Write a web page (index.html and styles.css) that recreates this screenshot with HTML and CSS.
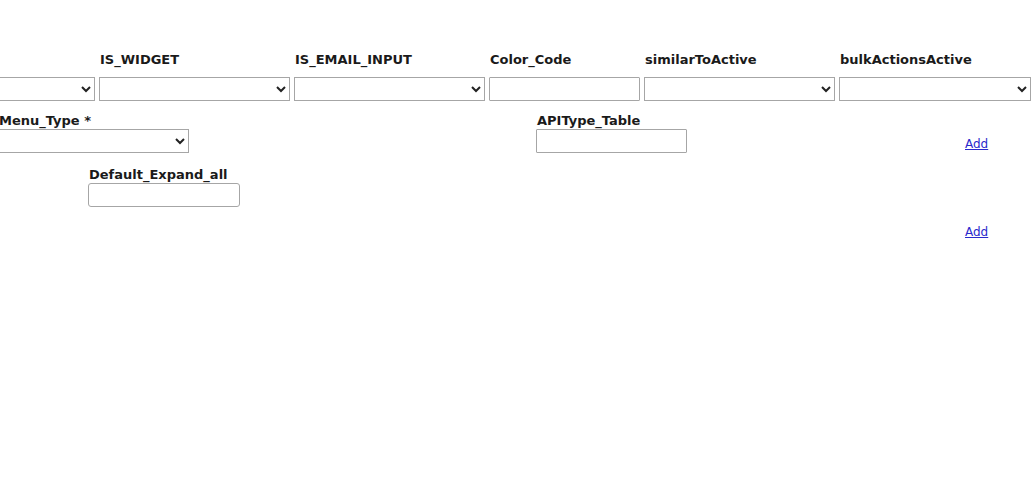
FILE: index.html
```html
<!DOCTYPE html>
<html>
<head>
<meta charset="utf-8">
<link rel="stylesheet" href="styles.css">
</head>
<body>
<div class="page">
  <div class="row-top">
    <div class="field">
      <span class="lbl">&nbsp;</span>
      <select class="sel"><option></option></select>
    </div>
    <div class="field">
      <span class="lbl">IS_WIDGET</span>
      <select class="sel"><option></option></select>
    </div>
    <div class="field">
      <span class="lbl">IS_EMAIL_INPUT</span>
      <select class="sel"><option></option></select>
    </div>
    <div class="field">
      <span class="lbl">Color_Code</span>
      <input class="txt" type="text">
    </div>
    <div class="field">
      <span class="lbl">similarToActive</span>
      <select class="sel"><option></option></select>
    </div>
    <div class="field">
      <span class="lbl">bulkActionsActive</span>
      <select class="sel sel-last"><option></option></select>
    </div>
  </div>

  <div class="row-mid">
    <div class="field">
      <span class="lbl lbl-tight">Menu_Type *</span>
      <select class="sel"><option></option></select>
    </div>
    <div class="field">
      <span class="lbl lbl-tight">APIType_Table</span>
      <input class="txt" type="text">
    </div>
    <div class="add-cell"><a href="#" class="add">Add</a></div>
  </div>

  <div class="row-expand">
    <div class="field">
      <span class="lbl lbl-tight">Default_Expand_all</span>
      <input class="txt txt-round" type="text">
    </div>
  </div>

  <div class="row-add">
    <a href="#" class="add">Add</a>
  </div>
</div>
</body>
</html>
```

FILE: styles.css
```css
html, body {
  margin: 0;
  padding: 0;
  background: #ffffff;
  overflow: hidden;
}

.page {
  font-family: "DejaVu Sans", Verdana, sans-serif;
  color: #1a1a1a;
  width: 1033px;
  height: 493px;
}

.row-top {
  display: flex;
  gap: 4px;
  margin-left: -96px;
  padding-top: 52px;
}

.field {
  display: flex;
  flex-direction: column;
  align-items: flex-start;
}

.lbl {
  font-weight: bold;
  font-size: 13px;
  line-height: 16px;
  margin-bottom: 9px;
  padding-left: 1px;
  white-space: nowrap;
}

.lbl-tight {
  margin-bottom: 0;
}

.sel {
  width: 191px;
  height: 24px;
  margin: 0;
  font-size: 13px;
  font-family: "DejaVu Sans", sans-serif;
  border: 1px solid #a6a6a6;
  border-radius: 0;
  background-color: #ffffff;
  color: #222;
}

.sel-last {
  width: 192px;
}

.txt {
  box-sizing: border-box;
  width: 151px;
  height: 24px;
  margin: 0;
  padding: 0 4px;
  border: 1px solid #a6a6a6;
  border-radius: 1px;
  background: #ffffff;
  font-size: 13px;
}

.txt-round {
  width: 152px;
  border-radius: 3px;
}

.row-mid {
  display: grid;
  grid-template-columns: 538px 429px auto;
  margin-left: -2px;
  margin-top: 12px;
}

.add-cell {
  padding-top: 20px;
}

.add {
  font-family: "DejaVu Sans", Verdana, sans-serif;
  font-size: 12px;
  line-height: 14px;
  color: #2a2acc;
  text-decoration: underline;
}

.row-expand {
  padding-left: 88px;
  margin-top: 14px;
}

.row-add {
  padding-left: 965px;
  margin-top: 14px;
}
```
